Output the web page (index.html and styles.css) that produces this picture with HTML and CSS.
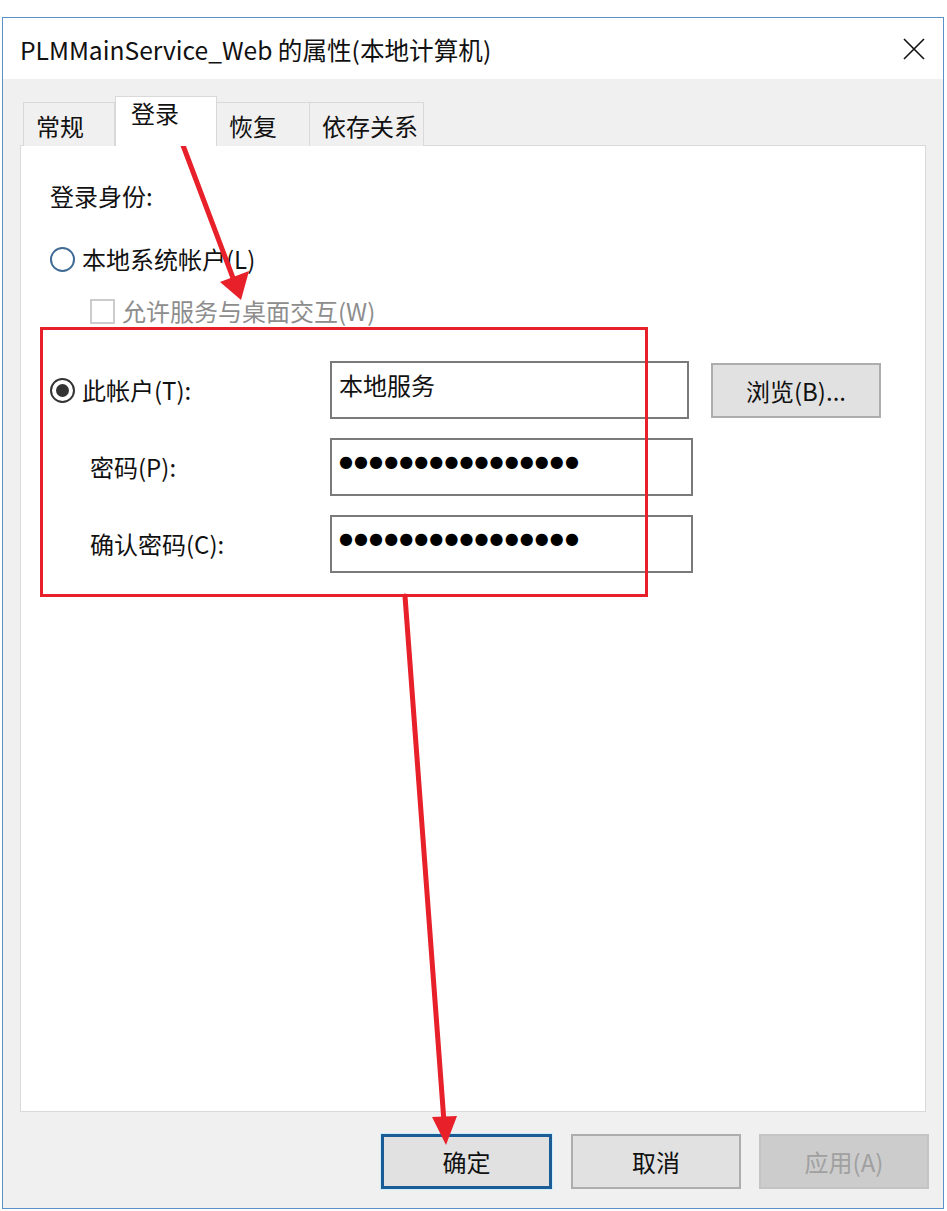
FILE: index.html
```html
<!DOCTYPE html>
<html lang="zh-CN">
<head>
<meta charset="utf-8">
<title>PLMMainService_Web 的属性(本地计算机)</title>
<link rel="stylesheet" href="styles.css">
</head>
<body>
<div class="window">
  <div class="titlebar">
    <span class="title">PLMMainService_Web 的属性(本地计算机)</span>
    <svg class="close" width="22" height="22" viewBox="0 0 22 22"><path d="M1 1 L21 21 M21 1 L1 21" stroke="#111" stroke-width="1.6" fill="none"/></svg>
  </div>
  <div class="body">
    <div class="tabs">
      <div class="tab">常规</div>
      <div class="tab tab-active">登录</div>
      <div class="tab">恢复</div>
      <div class="tab">依存关系</div>
    </div>
    <div class="panel">
      <div class="heading">登录身份:</div>
      <div class="option">
        <span class="radio"></span>
        <span>本地系统帐户(L)</span>
      </div>
      <div class="option option-indent disabled">
        <span class="checkbox"></span>
        <span>允许服务与桌面交互(W)</span>
      </div>
      <div class="form">
        <div class="form-row">
          <div class="label option"><span class="radio radio-checked"></span><span>此帐户(T):</span></div>
          <div class="field field-narrow">本地服务</div>
          <div class="btn btn-browse">浏览(B)...</div>
        </div>
        <div class="form-row">
          <div class="label label-indent">密码(P):</div>
          <div class="field"><span class="dots">●●●●●●●●●●●●●●●●</span></div>
        </div>
        <div class="form-row">
          <div class="label label-indent">确认密码(C):</div>
          <div class="field"><span class="dots">●●●●●●●●●●●●●●●●</span></div>
        </div>
      </div>
    </div>
    <div class="actions">
      <div class="btn btn-default">确定</div>
      <div class="btn">取消</div>
      <div class="btn btn-disabled">应用(A)</div>
    </div>
  </div>
</div>
<div class="highlight"></div>
<svg class="arrows" width="947" height="1211" viewBox="0 0 947 1211">
  <line x1="181" y1="140" x2="233" y2="278" stroke="#e8202a" stroke-width="5" stroke-linecap="round"/>
  <polygon points="241,300 220,282 249,271" fill="#e8202a"/>
  <line x1="405" y1="596" x2="444" y2="1122" stroke="#e8202a" stroke-width="5" stroke-linecap="round"/>
  <polygon points="446,1145 432,1117 457,1116" fill="#e8202a"/>
</svg>
</body>
</html>
```
FILE: styles.css
```css
html, body {
  margin: 0;
  padding: 0;
  background: #ffffff;
}
body {
  position: relative;
  width: 947px;
  height: 1211px;
  overflow: hidden;
  font-family: "Noto Sans CJK SC", "Noto Sans", sans-serif;
  font-size: 24px;
  color: #111;
}
.window {
  margin: 17px 0 0 2px;
  width: 942px;
  height: 1192px;
  box-sizing: border-box;
  border: 1px solid #5b91c9;
  display: flex;
  flex-direction: column;
  background: #f0f0f0;
}
.titlebar {
  height: 61px;
  flex: none;
  background: #ffffff;
  display: flex;
  align-items: center;
  justify-content: space-between;
  padding: 0 18px 0 17px;
}
.title {
  font-size: 24.6px;
  line-height: 30px;
  color: #111;
}
.close {
  display: block;
}
.body {
  flex: 1;
  display: flex;
  flex-direction: column;
  padding: 18px 17px 0 17px;
}
.tabs {
  display: flex;
  align-items: flex-end;
  height: 49px;
  padding-left: 3px;
  position: relative;
  z-index: 1;
  margin-bottom: -1px;
}
.tab {
  height: 44px;
  box-sizing: border-box;
  min-width: 93px;
  padding: 10px 5px 0 12px;
  line-height: 26px;
  border: 1px solid #d9d9d9;
  border-bottom: none;
  border-left: none;
  background: #f0f0f0;
}
.tab:first-child {
  border-left: 1px solid #d9d9d9;
  min-width: 92px;
}
.tab-active {
  height: 50px;
  min-width: 102px;
  padding: 3px 10px 0 15px;
  border-left: 1px solid #d9d9d9;
  background: #ffffff;
  position: relative;
  z-index: 2;
}
.panel {
  height: 967px;
  box-sizing: border-box;
  background: #ffffff;
  border: 1px solid #d9d9d9;
  padding: 35px 0 0 29px;
  display: flex;
  flex-direction: column;
}
.heading {
  line-height: 30px;
}
.option {
  display: flex;
  align-items: center;
  gap: 7px;
  line-height: 30px;
}
.panel > .option:nth-child(2) {
  margin-top: 33px;
}
.option-indent {
  margin-top: 22px;
  padding-left: 40px;
}
.disabled {
  color: #8d8d8d;
}
.radio {
  width: 25px;
  height: 25px;
  box-sizing: border-box;
  border-radius: 50%;
  border: 2px solid #3f6b95;
  background: #fff;
  flex: none;
  display: flex;
  align-items: center;
  justify-content: center;
}
.radio-checked {
  border-color: #333;
}
.radio-checked::after {
  content: "";
  width: 13px;
  height: 13px;
  border-radius: 50%;
  background: #333;
}
.checkbox {
  width: 25px;
  height: 25px;
  box-sizing: border-box;
  border: 2px solid #cccccc;
  background: #fff;
  flex: none;
}
.form {
  margin-top: 35px;
  display: flex;
  flex-direction: column;
  gap: 19px;
}
.form-row {
  display: flex;
  align-items: center;
}
.label {
  width: 280px;
  flex: none;
  line-height: 30px;
}
.label-indent {
  padding-left: 40px;
  box-sizing: border-box;
}
.field {
  width: 363px;
  height: 58px;
  box-sizing: border-box;
  border: 2px solid #7a7a7a;
  background: #fff;
  padding: 9px 0 0 7px;
  line-height: 26px;
}
.field-narrow {
  width: 359px;
}
.dots {
  display: block;
  font-family: "DejaVu Sans", sans-serif;
  font-size: 16px;
  letter-spacing: 1.1px;
  line-height: 25px;
  color: #000;
}
.btn {
  width: 170px;
  height: 55px;
  box-sizing: border-box;
  border: 2px solid #adadad;
  background: #e1e1e1;
  display: flex;
  align-items: center;
  justify-content: center;
  flex: none;
}
.btn-browse {
  margin-left: 22px;
}
.actions {
  display: flex;
  justify-content: flex-end;
  gap: 18px;
  margin: 22px -3px 0 0;
}
.btn-default {
  width: 171px;
  margin-right: 1px;
  border: 3px solid #1b5c97;
  box-shadow: 0 0 0 1px #cdeefb;
}
.btn-disabled {
  background: #cccccc;
  border-color: #c4c4c4;
  color: #a0a0a0;
}
.highlight {
  position: absolute;
  left: 40px;
  top: 327px;
  width: 608px;
  height: 270px;
  box-sizing: border-box;
  border: 3px solid #e8202a;
}
.arrows {
  position: absolute;
  left: 0;
  top: 0;
  pointer-events: none;
}
```
